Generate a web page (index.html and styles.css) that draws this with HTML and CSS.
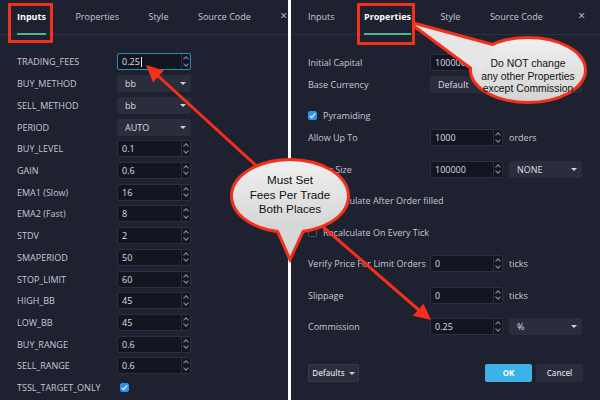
FILE: index.html
```html
<!DOCTYPE html>
<html>
<head>
<meta charset="utf-8">
<link rel="stylesheet" href="styles.css">
</head>
<body>
<div class="page">
  <section class="panel left">
    <header class="tabs">
      <span class="tab active">Inputs</span>
      <span class="tab">Properties</span>
      <span class="tab">Style</span>
      <span class="tab">Source Code</span>
      <span class="close">×</span>
    </header>
    <div class="form form-inputs">
      <div class="row"><span class="label">TRADING_FEES</span><div class="num focus"><span class="val">0.25<i class="caret"></i></span><span class="spin"><b class="up"></b><b class="down"></b></span></div></div>
      <div class="row"><span class="label">BUY_METHOD</span><div class="sel">bb</div></div>
      <div class="row"><span class="label">SELL_METHOD</span><div class="sel">bb</div></div>
      <div class="row"><span class="label">PERIOD</span><div class="sel">AUTO</div></div>
      <div class="row"><span class="label">BUY_LEVEL</span><div class="num"><span class="val">0.1</span><span class="spin"><b class="up"></b><b class="down"></b></span></div></div>
      <div class="row"><span class="label">GAIN</span><div class="num"><span class="val">0.6</span><span class="spin"><b class="up"></b><b class="down"></b></span></div></div>
      <div class="row"><span class="label">EMA1 (Slow)</span><div class="num"><span class="val">16</span><span class="spin"><b class="up"></b><b class="down"></b></span></div></div>
      <div class="row"><span class="label">EMA2 (Fast)</span><div class="num"><span class="val">8</span><span class="spin"><b class="up"></b><b class="down"></b></span></div></div>
      <div class="row"><span class="label">STDV</span><div class="num"><span class="val">2</span><span class="spin"><b class="up"></b><b class="down"></b></span></div></div>
      <div class="row"><span class="label">SMAPERIOD</span><div class="num"><span class="val">50</span><span class="spin"><b class="up"></b><b class="down"></b></span></div></div>
      <div class="row"><span class="label">STOP_LIMIT</span><div class="num"><span class="val">60</span><span class="spin"><b class="up"></b><b class="down"></b></span></div></div>
      <div class="row"><span class="label">HIGH_BB</span><div class="num"><span class="val">45</span><span class="spin"><b class="up"></b><b class="down"></b></span></div></div>
      <div class="row"><span class="label">LOW_BB</span><div class="num"><span class="val">45</span><span class="spin"><b class="up"></b><b class="down"></b></span></div></div>
      <div class="row"><span class="label">BUY_RANGE</span><div class="num"><span class="val">0.6</span><span class="spin"><b class="up"></b><b class="down"></b></span></div></div>
      <div class="row"><span class="label">SELL_RANGE</span><div class="num"><span class="val">0.6</span><span class="spin"><b class="up"></b><b class="down"></b></span></div></div>
      <div class="row"><span class="label">TSSL_TARGET_ONLY</span><span class="check on inset"></span></div>
    </div>
  </section>
  <div class="divider"></div>
  <section class="panel right">
    <header class="tabs">
      <span class="tab">Inputs</span>
      <span class="tab active">Properties</span>
      <span class="tab">Style</span>
      <span class="tab">Source Code</span>
      <span class="close">×</span>
    </header>
    <div class="form form-props">
      <div class="prow"><span class="plabel">Initial Capital</span><div class="num wide"><span class="val">100000</span><span class="spin"><b class="up"></b><b class="down"></b></span></div></div>
      <div class="prow"><span class="plabel">Base Currency</span><div class="sel long">Default</div></div>
      <div class="prow gap"><span class="check on"></span><span class="clabel">Pyramiding</span></div>
      <div class="prow"><span class="plabel">Allow Up To</span><div class="num wide"><span class="val">1000</span><span class="spin"><b class="up"></b><b class="down"></b></span></div><span class="unit">orders</span></div>
      <div class="prow gap"><span class="plabel">Order Size</span><div class="num wide"><span class="val">100000</span><span class="spin"><b class="up"></b><b class="down"></b></span></div><div class="sel mid">NONE</div></div>
      <div class="prow gap"><span class="check"></span><span class="clabel">Recalculate After Order filled</span></div>
      <div class="prow gap"><span class="check"></span><span class="clabel">Recalculate On Every Tick</span></div>
      <div class="prow gap"><span class="plabel">Verify Price For Limit Orders</span><div class="num wide"><span class="val">0</span><span class="spin"><b class="up"></b><b class="down"></b></span></div><span class="unit">ticks</span></div>
      <div class="prow gap"><span class="plabel">Slippage</span><div class="num wide"><span class="val">0</span><span class="spin"><b class="up"></b><b class="down"></b></span></div><span class="unit">ticks</span></div>
      <div class="prow gap"><span class="plabel">Commission</span><div class="num wide"><span class="val">0.25</span><span class="spin"><b class="up"></b><b class="down"></b></span></div><div class="sel mid">%</div></div>
      <footer class="actions">
        <span class="btn defaults">Defaults <i class="tri"></i></span>
        <span class="spacer"></span>
        <span class="btn ok">OK</span>
        <span class="btn cancel">Cancel</span>
      </footer>
    </div>
  </section>

  <svg class="annot" width="600" height="400" viewBox="0 0 600 400">
    <defs>
      <linearGradient id="bg" x1="0" y1="0" x2="0" y2="1">
        <stop offset="0" stop-color="#f0f0f0"/>
        <stop offset="1" stop-color="#d4d4d4"/>
      </linearGradient>
    </defs>
    <!-- red boxes -->
    <rect x="9.5" y="4.5" width="42" height="37" fill="none" stroke="#f2301c" stroke-width="3"/>
    <rect x="358.5" y="4.5" width="55" height="39" fill="none" stroke="#f2301c" stroke-width="3"/>
    <!-- arrows -->
    <line x1="262" y1="171" x2="156" y2="74" stroke="#f2301c" stroke-width="3"/>
    <polygon points="146,65 163.9,70.6 153.1,82.4" fill="#f2301c"/>
    <line x1="322" y1="226" x2="420" y2="311" stroke="#f2301c" stroke-width="3"/>
    <polygon points="431,320 412.9,315.8 423.5,303.8" fill="#f2301c"/>
    <!-- bubble 1 -->
    <g stroke="#f2301c" stroke-width="6" fill="#f2301c">
      <ellipse cx="290" cy="196" rx="57" ry="35"/>
      <polygon points="276,224 290,256 305,224" stroke-linejoin="miter"/>
    </g>
    <g fill="url(#bg)">
      <ellipse cx="290" cy="196" rx="57" ry="35"/>
    </g>
    <polygon points="276,224 290,256 305,224" fill="#d7d7d7"/>
    <text class="btext1" x="290" y="184" text-anchor="middle">Must Set</text>
    <text class="btext1" x="290" y="198.5" text-anchor="middle">Fees Per Trade</text>
    <text class="btext1" x="290" y="213" text-anchor="middle">Both Places</text>
    <!-- bubble 2 -->
    <g stroke="#f2301c" stroke-width="6" fill="#f2301c" stroke-linejoin="round">
      <ellipse cx="528" cy="70" rx="56" ry="31"/>
      <polygon points="415,25 496,47 481,74"/>
    </g>
    <polygon points="415,25 496,47 481,74" fill="#e6e6e6"/>
    <ellipse cx="528" cy="70" rx="56" ry="31" fill="url(#bg)"/>
    <polygon points="470,48 496,47 481,74" fill="#e6e6e6"/>
    <text class="btext2" x="528" y="67" text-anchor="middle">Do NOT change</text>
    <text class="btext2" x="528" y="79.5" text-anchor="middle">any other Properties</text>
    <text class="btext2" x="528" y="92" text-anchor="middle">except Commission</text>
  </svg>
</div>
</body>
</html>
```

FILE: styles.css
```css
* { box-sizing: border-box; margin: 0; padding: 0; }

body {
  width: 600px;
  height: 400px;
  overflow: hidden;
  background: #ffffff;
  font-family: "Open Sans", "DejaVu Sans", sans-serif;
}

.page {
  position: relative;
  display: flex;
  gap: 3px;
  width: 600px;
  height: 400px;
  background: #ffffff;
}

.panel {
  height: 400px;
  background: #1e2130;
  color: #c5c8d0;
  font-size: 9px;
  display: flex;
  flex-direction: column;
}

.left { width: 288px; }
.right { width: 309px; }
.divider { display: none; }

.tabs {
  height: 35px;
  flex: none;
  display: flex;
  align-items: stretch;
  gap: 29.5px;
  padding: 0 15px 0 17px;
  border-bottom: 1px solid #2c3040;
}

.tab {
  position: relative;
  line-height: 34px;
  font-size: 9px;
  color: #c5c8d0;
  white-space: nowrap;
}

.tab.active {
  color: #ffffff;
  font-weight: 700;
}

.tab.active::after {
  content: "";
  position: absolute;
  left: 0;
  right: 0;
  bottom: -1px;
  height: 2px;
  background: #4fb58a;
}

.close {
  margin-left: auto;
  line-height: 32px;
  font-size: 12px;
  color: #c5c8d0;
}

.form {
  padding: 16px 17px 0 17px;
  display: flex;
  flex-direction: column;
}

.row {
  height: 21.73px;
  display: flex;
  align-items: center;
}

.label {
  width: 100px;
  flex: none;
  white-space: nowrap;
}

.num {
  width: 74px;
  height: 17px;
  flex: none;
  display: flex;
  background: #131621;
  border: 1px solid #2b2f3e;
  border-radius: 2px;
}

.num.focus { border-color: #2f8bbd; }

.num.wide { width: 73px; }

.val {
  flex: 1;
  padding-left: 4px;
  line-height: 15px;
  color: #dcdee3;
  position: relative;
}

.caret {
  display: inline-block;
  width: 1px;
  height: 10px;
  margin-left: 1px;
  vertical-align: -2px;
  background: #e6e6e6;
}

.spin {
  width: 9px;
  flex: none;
  display: flex;
  flex-direction: column;
  border-left: 1px solid #2b2f3e;
}

.spin b {
  flex: 1;
  position: relative;
}

.spin b::after {
  content: "";
  position: absolute;
  left: 2px;
  width: 3px;
  height: 3px;
  border-top: 1px solid #8d93a0;
  border-left: 1px solid #8d93a0;
}

.spin .up::after { top: 3px; transform: rotate(45deg); }
.spin .down::after { top: 0px; transform: rotate(225deg); }

.sel {
  position: relative;
  width: 74px;
  height: 17px;
  flex: none;
  padding-left: 8px;
  line-height: 17px;
  background: #2a2d3c;
  border-radius: 2px;
  color: #dcdee3;
}

.sel::after {
  content: "";
  position: absolute;
  right: 5px;
  top: 7px;
  border-left: 3px solid transparent;
  border-right: 3px solid transparent;
  border-top: 3px solid #d0d3da;
}

.sel.long { width: 152px; }
.sel.mid { width: 73px; margin-left: 6px; }

.check {
  width: 9px;
  height: 9px;
  flex: none;
  position: relative;
  border: 1px solid #4a4f60;
  border-radius: 2px;
  background: #1a1d2a;
}

.check.on {
  background: #2f90f0;
  border-color: #2f90f0;
}

.check.on::after {
  content: "";
  position: absolute;
  left: 2px;
  top: 0px;
  width: 2px;
  height: 5px;
  border-right: 1.3px solid #ffffff;
  border-bottom: 1.3px solid #ffffff;
  transform: rotate(40deg);
}

.check.inset { margin-left: 3px; }

.prow {
  height: 22px;
  display: flex;
  align-items: center;
}

.prow.gap { margin-top: 9.5px; }

.plabel {
  width: 122px;
  flex: none;
  white-space: nowrap;
}

.clabel { margin-left: 6px; white-space: nowrap; }

.unit { margin-left: 6px; }

.actions {
  margin-top: 26.5px;
  display: flex;
  align-items: center;
  gap: 4px;
}

.spacer { flex: 1; }

.btn {
  height: 18px;
  line-height: 18px;
  font-size: 8px;
  text-align: center;
  border-radius: 2px;
  color: #d3d6dd;
  background: #2a2d3c;
}

.defaults {
  width: 51px;
  border: 1px solid #363a4a;
  line-height: 16px;
  font-weight: 600;
}

.tri {
  display: inline-block;
  margin-left: 2px;
  vertical-align: 1px;
  border-left: 3px solid transparent;
  border-right: 3px solid transparent;
  border-top: 3px solid #c9ccd4;
}

.ok {
  width: 47px;
  background: #3cb2e6;
  color: #ffffff;
  font-weight: 700;
}

.cancel { width: 47px; font-weight: 600; }

.annot {
  position: absolute;
  left: 0;
  top: 0;
  pointer-events: none;
}

.btext1 {
  font-family: "Liberation Sans", Arial, sans-serif;
  font-size: 11.7px;
  fill: #111111;
}

.btext2 {
  font-family: "Liberation Sans", Arial, sans-serif;
  font-size: 10.4px;
  fill: #111111;
}
```
